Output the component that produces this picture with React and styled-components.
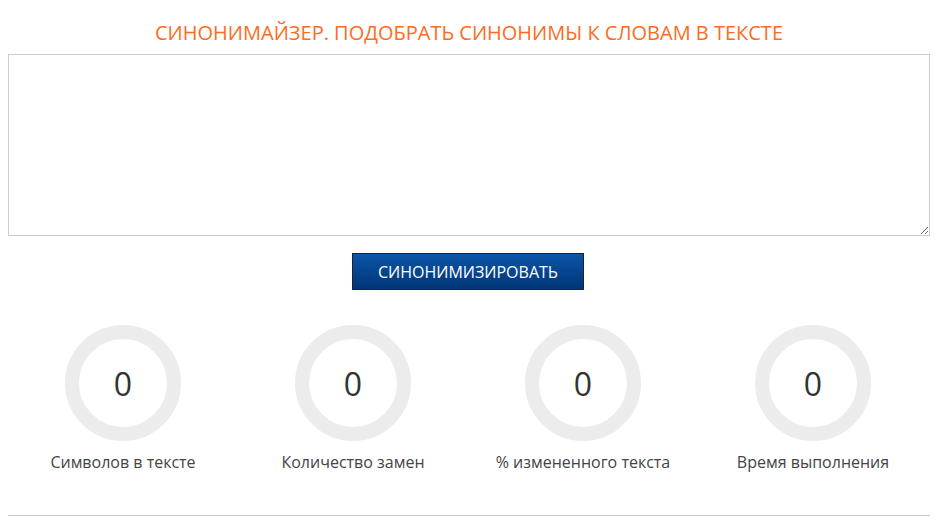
import React, { useState } from 'react';
import styled, { createGlobalStyle } from 'styled-components';

const GlobalStyle = createGlobalStyle`
  html, body {
    margin: 0;
    padding: 0;
    background: #fff;
    font-family: "Open Sans", "Liberation Sans", Arial, sans-serif;
  }
`;

const Page = styled.main`
  width: 922px;
  margin: 0 0 0 8px;
  padding-top: 20px;
  display: flex;
  flex-direction: column;
  align-items: center;
`;

const Title = styled.h1`
  margin: 0 0 8px;
  font-size: 20px;
  font-weight: 400;
  line-height: 26px;
  color: #ff6b1c;
  text-transform: uppercase;
  text-align: center;
`;

const TextArea = styled.textarea`
  box-sizing: border-box;
  width: 100%;
  height: 182px;
  margin: 0;
  padding: 6px 8px;
  border: 1px solid #cccccc;
  font-family: inherit;
  font-size: 14px;
  resize: vertical;
  outline: none;
  display: block;
`;

const Button = styled.button`
  margin-top: 17px;
  margin-right: 2px;
  width: 232px;
  height: 37px;
  border: 1px solid #1c2233;
  background: linear-gradient(to bottom, #0b55a8 0%, #003576 100%);
  color: #fff;
  font-family: inherit;
  font-size: 16px;
  text-transform: uppercase;
  cursor: pointer;
`;

const Stats = styled.div`
  align-self: flex-start;
  width: 920px;
  margin-top: 35px;
  display: grid;
  grid-template-columns: repeat(4, 1fr);
`;

const Stat = styled.div`
  display: flex;
  flex-direction: column;
  align-items: center;
`;

const Ring = styled.div`
  box-sizing: border-box;
  width: 116px;
  height: 116px;
  border-radius: 50%;
  border: 14px solid #ececec;
  display: flex;
  align-items: center;
  justify-content: center;
  font-size: 32px;
  color: #333;
  font-weight: 400;
`;

const Label = styled.div`
  margin-top: 10px;
  font-size: 16px;
  line-height: 22px;
  color: #444;
`;

const Divider = styled.hr`
  width: 100%;
  margin: 42px 0 0;
  border: 0;
  border-top: 1px solid #cccccc;
`;

const stats = [
  'Символов в тексте',
  'Количество замен',
  '% измененного текста',
  'Время выполнения',
];

export default function App() {
  const [text, setText] = useState('');
  return (
    <>
      <GlobalStyle />
      <Page>
        <Title>Синонимайзер. Подобрать синонимы к словам в тексте</Title>
        <TextArea value={text} onChange={(e) => setText(e.target.value)} />
        <Button>Синонимизировать</Button>
        <Stats>
          {stats.map((label) => (
            <Stat key={label}>
              <Ring>0</Ring>
              <Label>{label}</Label>
            </Stat>
          ))}
        </Stats>
        <Divider />
      </Page>
    </>
  );
}
